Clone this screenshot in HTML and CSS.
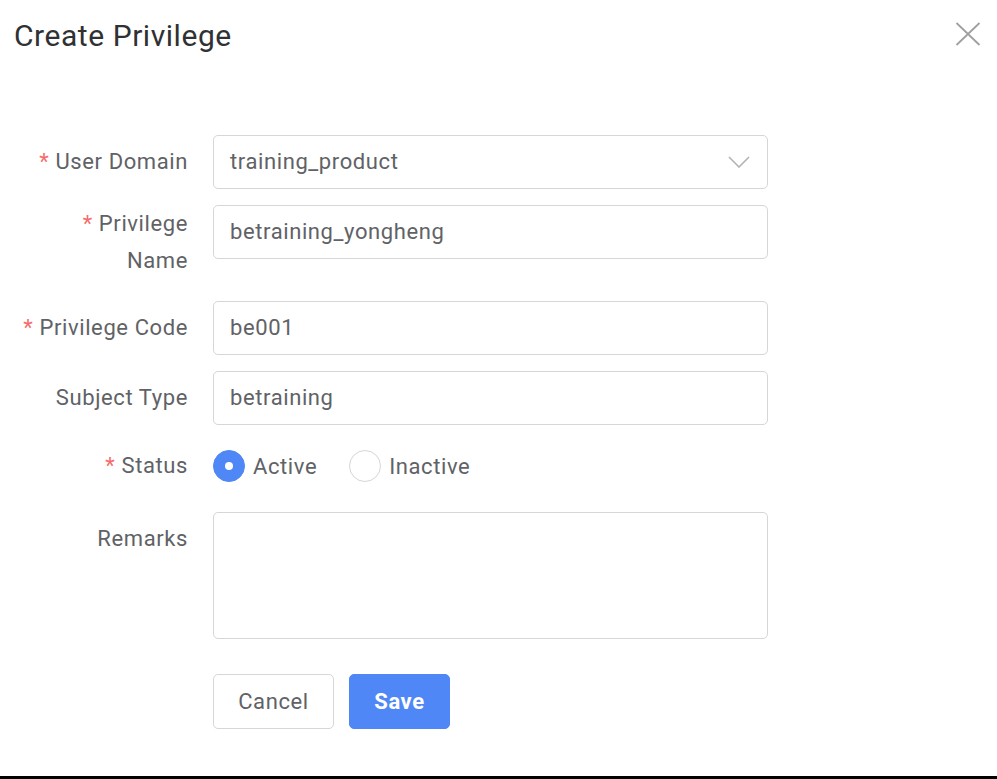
FILE: index.html
```html
<!DOCTYPE html>
<html>
<head>
<meta charset="utf-8">
<link rel="stylesheet" href="styles.css">
</head>
<body>
<div class="dialog">
  <div class="header">
    <div class="title">Create Privilege</div>
    <div class="close">
      <svg width="26" height="24" viewBox="0 0 26 24"><path d="M1.5 1 L24.5 23 M24.5 1 L1.5 23" stroke="#a0a0a0" stroke-width="1.8" fill="none"/></svg>
    </div>
  </div>
  <div class="form">
    <div class="item">
      <div class="label"><span class="req">*</span> User Domain</div>
      <div class="control">
        <div class="input select">
          <span>training_product</span>
          <svg class="arrow" width="22" height="12" viewBox="0 0 22 12"><path d="M1 1 L11 11 L21 1" stroke="#b0b3b8" stroke-width="1.6" fill="none"/></svg>
        </div>
      </div>
    </div>
    <div class="item item-tall">
      <div class="label label-wrap"><span class="req">*</span> Privilege<br>Name</div>
      <div class="control">
        <div class="input">betraining_yongheng</div>
      </div>
    </div>
    <div class="item">
      <div class="label"><span class="req">*</span> Privilege Code</div>
      <div class="control">
        <div class="input">be001</div>
      </div>
    </div>
    <div class="item">
      <div class="label">Subject Type</div>
      <div class="control">
        <div class="input">betraining</div>
      </div>
    </div>
    <div class="item item-radio">
      <div class="label"><span class="req">*</span> Status</div>
      <div class="control radios">
        <label class="radio"><span class="dot checked"></span>Active</label>
        <label class="radio"><span class="dot"></span>Inactive</label>
      </div>
    </div>
    <div class="item item-remarks">
      <div class="label">Remarks</div>
      <div class="control">
        <div class="textarea"></div>
      </div>
    </div>
    <div class="item">
      <div class="label"></div>
      <div class="control buttons">
        <button class="btn btn-cancel">Cancel</button>
        <button class="btn btn-save">Save</button>
      </div>
    </div>
  </div>
</div>
</body>
</html>
```
FILE: styles.css
```css
html, body {
  margin: 0;
  padding: 0;
  background: #fff;
}
body {
  font-family: Roboto, "Noto Sans", Arial, sans-serif;
  color: #606266;
  letter-spacing: 0.6px;
}
.dialog {
  height: 776px;
  border-bottom: 3px solid #000;
  overflow: hidden;
}
.header {
  display: flex;
  justify-content: space-between;
  align-items: flex-start;
  padding: 14px 16px 0 14px;
}
.title {
  font-size: 30px;
  line-height: 44px;
  color: #303133;
  letter-spacing: 0.55px;
}
.close {
  margin-top: 8px;
  width: 26px;
  height: 24px;
}
.form {
  padding-top: 77px;
}
.item {
  display: flex;
  margin-bottom: 16px;
}
.label {
  width: 188px;
  flex: none;
  text-align: right;
  font-size: 22px;
  line-height: 54px;
  color: #606266;
  white-space: nowrap;
}
.label-wrap {
  line-height: 37px;
  padding-top: 0;
}
.item-tall {
  min-height: 80px;
}
.req {
  color: #f56c6c;
}
.control {
  margin-left: 25px;
  width: 555px;
}
.input {
  box-sizing: border-box;
  height: 54px;
  border: 1px solid #d4d6da;
  border-radius: 5px;
  padding: 0 16px;
  font-size: 22px;
  line-height: 52px;
  color: #606266;
}
.select {
  display: flex;
  justify-content: space-between;
  align-items: center;
}
.arrow {
  margin-right: 1px;
}
.item-radio {
  margin-bottom: 21px;
}
.item-radio .label {
  line-height: 50px;
}
.radios {
  display: flex;
  align-items: center;
  height: 50px;
}
.radio {
  display: flex;
  align-items: center;
  font-size: 22px;
  color: #606266;
  margin-right: 32px;
}
.dot {
  box-sizing: border-box;
  width: 32px;
  height: 32px;
  border-radius: 50%;
  border: 1px solid #d4d6da;
  background: #fff;
  margin-right: 8px;
  position: relative;
}
.dot.checked {
  background: #4f87f6;
  border-color: #4f87f6;
}
.dot.checked::after {
  content: "";
  position: absolute;
  left: 50%;
  top: 50%;
  width: 8px;
  height: 8px;
  margin: -4px 0 0 -4px;
  border-radius: 50%;
  background: #fff;
}
.item-remarks {
  margin-bottom: 35px;
}
.textarea {
  box-sizing: border-box;
  height: 127px;
  border: 1px solid #d4d6da;
  border-radius: 5px;
}
.buttons {
  display: flex;
  gap: 15px;
}
.btn {
  box-sizing: border-box;
  height: 55px;
  border-radius: 5px;
  font-family: Roboto, "Noto Sans", Arial, sans-serif;
  font-size: 22px;
  letter-spacing: 0.6px;
  padding: 0;
  cursor: pointer;
}
.btn-cancel {
  width: 121px;
  background: #fff;
  border: 1px solid #d4d6da;
  color: #606266;
}
.btn-save {
  width: 101px;
  background: #4f87f6;
  border: 1px solid #4f87f6;
  color: #fff;
  font-weight: bold;
}
```
